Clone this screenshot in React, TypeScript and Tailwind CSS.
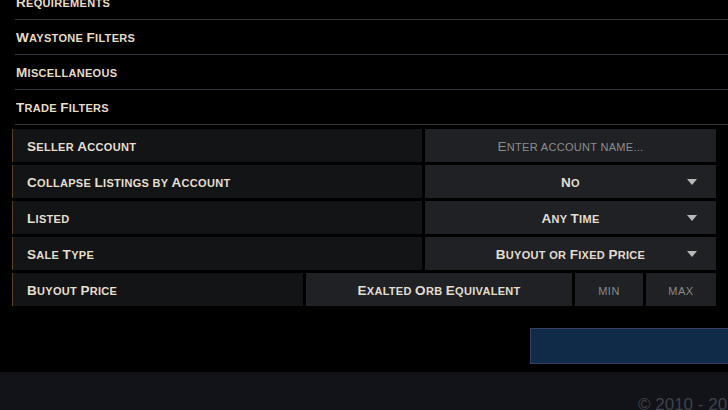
const font = { fontFamily: '"Liberation Sans", Arial, sans-serif' } as const;

// fake small caps: capitals stay big, the rest are uppercased at the smaller size
function SC({ text }: { text: string }) {
  const parts = text.split(/([A-Z]+)/);
  return (
    <>
      {parts.map((p, i) =>
        /^[A-Z]+$/.test(p) ? (
          <span key={i} className="text-[1.23em]">
            {p}
          </span>
        ) : (
          <span key={i}>{p.toUpperCase()}</span>
        )
      )}
    </>
  );
}

function Caret() {
  return (
    <svg width="10" height="6" viewBox="0 0 10 6" className="absolute right-[19px] top-1/2 -translate-y-1/2">
      <path d="M0 0h10L5 6z" fill="#b9b9b9" />
    </svg>
  );
}

function Section({ title }: { title: string }) {
  return (
    <div className="ml-[3px] flex h-[35px] items-center border-b border-[#34373e] pl-px pt-[3px] text-[11px] font-bold tracking-[0.3px] text-[#e6dcc6]">
      <span>
        <SC text={title} />
      </span>
    </div>
  );
}

function Label({ text, className = "flex-1" }: { text: string; className?: string }) {
  return (
    <div className={`${className} flex items-center border-l border-[#5c4024] bg-[#131416] pl-[14px] pt-[3px] text-[11px] font-bold tracking-[0.3px] text-[#e6dfcf]`}>
      <span>
        <SC text={text} />
      </span>
    </div>
  );
}

function Select({ value }: { value: string }) {
  return (
    <div className="relative flex w-[291px] items-center justify-center bg-[#1f2125] pt-[3px] text-[11px] font-bold tracking-[0.3px] text-[#e2ddd2]">
      <span>
        <SC text={value} />
      </span>
      <Caret />
    </div>
  );
}

export default function App() {
  return (
    <div className="flex h-[410px] w-[728px] flex-col overflow-hidden bg-black" style={font}>
      <div className="-mt-[15px] pl-3">
        <Section title="Requirements" />
        <Section title="Waystone Filters" />
        <Section title="Miscellaneous" />
        <Section title="Trade Filters" />
      </div>
      <div className="mt-[4px] flex flex-col gap-[3px] px-3">
        <div className="flex h-[33px] gap-[3px]">
          <Label text="Seller Account" />
          <div className="flex w-[291px] items-center justify-center bg-[#1f2125] pt-[3px] text-[11px] tracking-[0.3px] text-[#8d8d8d]">
            <span>
              <SC text="Enter account name..." />
            </span>
          </div>
        </div>
        <div className="flex h-[33px] gap-[3px]">
          <Label text="Collapse Listings by Account" />
          <Select value="No" />
        </div>
        <div className="flex h-[33px] gap-[3px]">
          <Label text="Listed" />
          <Select value="Any Time" />
        </div>
        <div className="flex h-[33px] gap-[3px]">
          <Label text="Sale Type" />
          <Select value="Buyout or Fixed Price" />
        </div>
        <div className="flex h-[33px] gap-[3px]">
          <Label text="Buyout Price" className="w-[291px]" />
          <div className="flex w-[266px] items-center justify-center bg-[#1f2125] pt-[3px] text-[11px] font-bold tracking-[0.3px] text-[#e2ddd2]">
            <span>
              <SC text="Exalted Orb Equivalent" />
            </span>
          </div>
          <div className="flex w-[68px] items-center justify-center bg-[#1f2125] pt-[3px] text-[11px] tracking-[0.5px] text-[#8a8a8a]">
            <SC text="min" />
          </div>
          <div className="flex flex-1 items-center justify-center bg-[#1f2125] pt-[3px] text-[11px] tracking-[0.5px] text-[#8a8a8a]">
            <SC text="max" />
          </div>
        </div>
      </div>
      <div className="mt-[22px] flex justify-end">
        <div className="h-[36px] w-[198px] border border-r-0 border-[#3a3d66] bg-[#0f2b48]" />
      </div>
      <div className="mt-auto h-[38px] overflow-hidden bg-[#111318] pl-[638px] pt-[20px]">
        <div className="whitespace-nowrap text-[17px] text-[#3f4248]">© 2010 - 2025 Grinding Gear Games</div>
      </div>
    </div>
  );
}
